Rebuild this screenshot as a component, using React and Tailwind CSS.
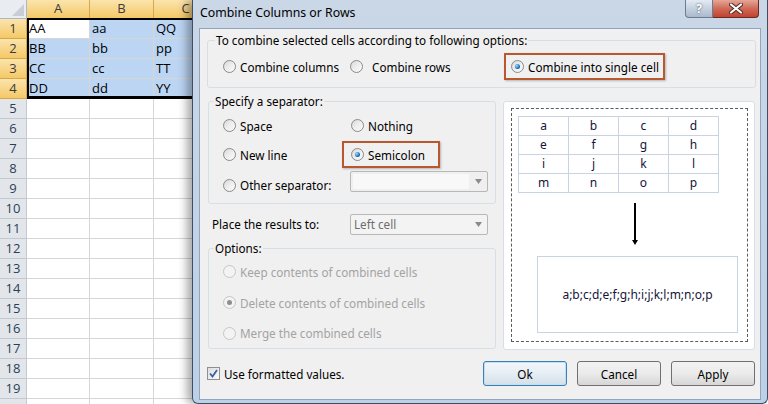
import React from "react";

const dlgFont = "font-['Noto_Sans',sans-serif] text-[11.7px] leading-[16px]";

const sheetData = [
  ["AA", "aa", "QQ"],
  ["BB", "bb", "pp"],
  ["CC", "cc", "TT"],
  ["DD", "dd", "YY"],
];

const previewCells = [
  ["a", "b", "c", "d"],
  ["e", "f", "g", "h"],
  ["i", "j", "k", "l"],
  ["m", "n", "o", "p"],
];

const Radio = ({ checked, disabled }) => (
  <span
    className={`w-[13px] h-[13px] rounded-full border flex items-center justify-center shrink-0 ${
      disabled
        ? "border-[#c6c6c6] bg-[#f3f3f3]"
        : "border-[#8a8a8a] bg-linear-to-br from-[#d8d8d8] via-[#eeeeee] to-[#fbfbfb]"
    }`}
  >
    {checked && (
      <span
        className={`w-[5px] h-[5px] rounded-full ${
          disabled
            ? "bg-[#8e8e8e]"
            : "bg-[radial-gradient(circle_at_35%_35%,#a6dcff,#1f78c0_55%,#0b3e70)]"
        }`}
      />
    )}
  </span>
);

const Option = ({ label, checked, disabled, gap = "gap-[4px]" }) => (
  <div className={`flex items-center ${gap} whitespace-nowrap`}>
    <Radio checked={checked} disabled={disabled} />
    <span className={disabled ? "text-[#a3a3a3]" : "text-black"}>{label}</span>
  </div>
);

const Marked = ({ children, className }) => (
  <div
    className={`h-[27px] flex items-center border-2 border-[#b9572f] shadow-[1px_1px_2px_rgba(0,0,0,0.25)] ${className}`}
  >
    {children}
  </div>
);

const Arrow = () => (
  <svg width="7" height="5" viewBox="0 0 7 5">
    <path d="M0 0 L7 0 L3.5 5 Z" fill="#8a8a8a" />
  </svg>
);

const Sheet = () => {
  const rows = Array.from({ length: 20 }, (_, i) => i + 1);
  return (
    <div className="relative font-['Open_Sans',sans-serif] text-[13px] text-black">
      <div className="flex h-[19px]">
        <div className="w-[27px] shrink-0 bg-[#e9edf2] border-r border-b border-[#a9b8c9] flex items-end justify-end pr-[2px] pb-[2px]">
          <svg width="12" height="12" viewBox="0 0 12 12">
            <path d="M12 0 L12 12 L0 12 Z" fill="#c9ced6" />
          </svg>
        </div>
        {["A", "B", "C"].map((c, i) => (
          <div
            key={c}
            className={`${
              i === 0 ? "w-[63px]" : "w-[64px]"
            } shrink-0 flex items-center justify-center bg-linear-to-b from-[#fbe4ac] to-[#f4c865] border-r border-b border-[#d7a848] text-[#3b3b3b]`}
          >
            {c}
          </div>
        ))}
        <div className="flex-1 bg-[#e4e9ef] border-b border-[#a9b8c9]" />
      </div>
      {rows.map((r) => {
        const sel = r <= 4;
        const data = sheetData[r - 1];
        return (
          <div key={r} className="flex h-[20px]">
            <div
              className={`w-[27px] shrink-0 flex items-center justify-center border-r border-b ${
                sel
                  ? "bg-linear-to-b from-[#fbe4ac] to-[#f4c865] border-[#d7a848] text-[#3b3b3b]"
                  : "bg-[#e2e6eb] border-[#c3c9d1] text-[#2c3e56]"
              }`}
            >
              {r < 20 ? r : ""}
            </div>
            {[0, 1, 2].map((c) => (
              <div
                key={c}
                className={`${
                  c === 0 ? "w-[63px]" : "w-[64px]"
                } shrink-0 pl-[2px] flex items-center border-r border-b border-[#d6d6d6] ${
                  sel && !(r === 1 && c === 0) ? "bg-[#bbd5f3]" : "bg-white"
                }`}
              >
                {data ? data[c] : ""}
              </div>
            ))}
            <div className="flex-1 border-b border-[#d6d6d6] bg-white" />
          </div>
        );
      })}
      <div className="absolute left-[27px] top-[18px] w-[200px] h-[81px] border-2 border-b-[3px] border-black pointer-events-none" />
    </div>
  );
};

const Button = ({ children, primary }) => (
  <button
    className={`w-[84px] h-[25px] rounded-[3px] border text-black ${
      primary
        ? "border-[#3c7fb1] bg-linear-to-b from-[#f2f7fb] via-[#e6eef4] to-[#d3dfe8] shadow-[inset_0_0_0_1px_#bfe1f6]"
        : "border-[#707070] bg-linear-to-b from-[#f2f2f2] via-[#ebebeb] to-[#d6d6d6]"
    }`}
  >
    {children}
  </button>
);

const Dialog = () => (
  <div
    className={`absolute left-[192px] top-0 w-[576px] h-[404px] flex flex-col bg-linear-to-b from-[#cad7e7] to-[#bcd0e7] border-l border-r border-b border-[#3e4e63] rounded-b-[6px] shadow-[-5px_0_10px_rgba(0,0,0,0.35)] ${dlgFont}`}
  >
    <div className="h-[28px] flex items-start shrink-0">
      <span className="pl-[7px] pt-[5px] text-[12.3px] text-black">Combine Columns or Rows</span>
      <div className="ml-auto mr-[8px] flex">
        <div className="w-[28px] h-[18px] rounded-bl-[4px] border border-t-0 border-[#6d7c90] bg-linear-to-b from-[#e3eaf3] to-[#a9b9cd] flex items-center justify-center text-white font-bold text-[12px] [text-shadow:0_0_2px_#33404f]">
          ?
        </div>
        <div className="w-[46px] h-[18px] rounded-br-[4px] border border-l-0 border-t-0 border-[#6b2a22] bg-linear-to-b from-[#e6a696] via-[#cf6a57] to-[#c1432f] flex items-center justify-center">
          <svg width="14" height="11" viewBox="0 0 14 11">
            <path d="M2 1.5 L12 9.5 M12 1.5 L2 9.5" stroke="#4a2a26" strokeWidth="4" strokeLinecap="round" />
            <path d="M2 1.5 L12 9.5 M12 1.5 L2 9.5" stroke="#ffffff" strokeWidth="2.2" strokeLinecap="round" />
          </svg>
        </div>
      </div>
    </div>

    <div className="ml-[6px] w-[562px] h-[372px] bg-[#f0f0f0] border border-[#91a5bd] pl-[7px] pr-[4px] pt-[3px] flex flex-col">
      <fieldset className="border border-[#d5dfe5] rounded-[3px] pl-[15px] pb-[7px]">
        <legend className="-ml-[8px] px-[1px]">To combine selected cells according to following options:</legend>
        <div className="flex items-center mt-[5px]">
          <div className="w-[127px]">
            <Option label="Combine columns" />
          </div>
          <div className="w-[154px]">
            <Option label="Combine rows" gap="gap-[9px]" />
          </div>
          <Marked className="w-[161px] pl-[5px]">
            <Option label="Combine into single cell" checked />
          </Marked>
        </div>
      </fieldset>

      <div className="flex gap-[7px] mt-[5px]">
        <div className="w-[288px] ml-[1px] flex flex-col">
          <fieldset className="border border-[#d5dfe5] rounded-[3px] pl-[14px] pb-[2px]">
            <legend className="-ml-[9px] px-[1px]">Specify a separator:</legend>
            <div className="flex items-center h-[29px] mt-[2px]">
              <div className="w-[128px]">
                <Option label="Space" />
              </div>
              <Option label="Nothing" />
            </div>
            <div className="flex items-center h-[29px]">
              <div className="w-[119px]">
                <Option label="New line" />
              </div>
              <Marked className="w-[98px] pl-[7px]">
                <Option label="Semicolon" checked />
              </Marked>
            </div>
            <div className="flex items-center h-[32px]">
              <div className="w-[127px]">
                <Option label="Other separator:" />
              </div>
              <div className="mb-[8px] w-[138px] h-[21px] border border-[#b8b8b8] rounded-[2px] bg-[#efefef] flex items-center pl-[2px] pr-[5px]">
                <div className="w-[116px] h-[15px] bg-[#f8f8f8]" />
                <div className="ml-auto">
                  <Arrow />
                </div>
              </div>
            </div>
          </fieldset>

          <div className="mt-[4px] h-[32px] flex items-center pl-[4px]">
            <span className="w-[138px]">Place the results to:</span>
            <div className="w-[138px] h-[21px] border border-[#b8b8b8] rounded-[2px] bg-[#f3f3f3] flex items-center pl-[3px] pr-[5px] text-[#6d6d6d]">
              Left cell
              <div className="ml-auto">
                <Arrow />
              </div>
            </div>
          </div>

          <fieldset className="border border-[#d5dfe5] rounded-[3px] pl-[14px]">
            <legend className="-ml-[9px] px-[1px]">Options:</legend>
            <div className="flex items-center h-[31px]">
              <Option label="Keep contents of combined cells" disabled />
            </div>
            <div className="flex items-center h-[31px]">
              <Option label="Delete contents of combined cells" checked disabled />
            </div>
            <div className="flex items-center h-[30px]">
              <Option label="Merge the combined cells" disabled />
            </div>
          </fieldset>
        </div>

        <div className="mt-[8px] w-[252px] h-[249px] bg-white border border-[#d5dfe5] rounded-[3px] pt-[6px] pl-[7px] pr-[6px] pb-[7px] flex">
          <div className="flex-1 border border-dashed border-[#5b5b5b] pt-[7px] pl-[6px] flex flex-col text-[12px] text-[#14143a]">
            <div className="w-[201px] border-t border-l border-[#c9d3e1]">
              {previewCells.map((row, i) => (
                <div key={i} className="flex">
                  {row.map((v) => (
                    <div
                      key={v}
                      className="w-[50px] h-[19px] border-r border-b border-[#c9d3e1] flex items-center justify-center leading-none"
                    >
                      {v}
                    </div>
                  ))}
                </div>
              ))}
            </div>
            <div className="mt-[10px] pl-[112px]">
              <svg width="10" height="43" viewBox="0 0 10 43">
                <path d="M5 0 L5 38" stroke="#000" strokeWidth="2" />
                <path d="M2 37 L8 37 L5 42 Z" fill="#000" />
              </svg>
            </div>
            <div className="mt-[10px] ml-[19px] w-[201px] h-[77px] border border-[#c9d3e1] flex items-center justify-center">
              a;b;c;d;e;f;g;h;i;j;k;l;m;n;o;p
            </div>
          </div>
        </div>
      </div>

      <div className="mt-[11px] h-[25px] flex items-center">
        <div className="flex items-center gap-[4px]">
          <span className="w-[13px] h-[13px] border border-[#8e8f8f] bg-linear-to-br from-[#dedede] to-[#fbfbfb] flex items-center justify-center">
            <svg width="9" height="9" viewBox="0 0 9 9">
              <path d="M1 4.5 L3.5 7.5 L8 1" stroke="#3b5ea5" strokeWidth="1.8" fill="none" />
            </svg>
          </span>
          <span>Use formatted values.</span>
        </div>
        <div className="ml-auto mr-[1px] flex gap-[10px]">
          <Button primary>Ok</Button>
          <Button>Cancel</Button>
          <Button>Apply</Button>
        </div>
      </div>
    </div>
  </div>
);

const App = () => (
  <div className="relative w-[768px] h-[404px] overflow-hidden bg-white">
    <Sheet />
    <Dialog />
  </div>
);

export default App;
